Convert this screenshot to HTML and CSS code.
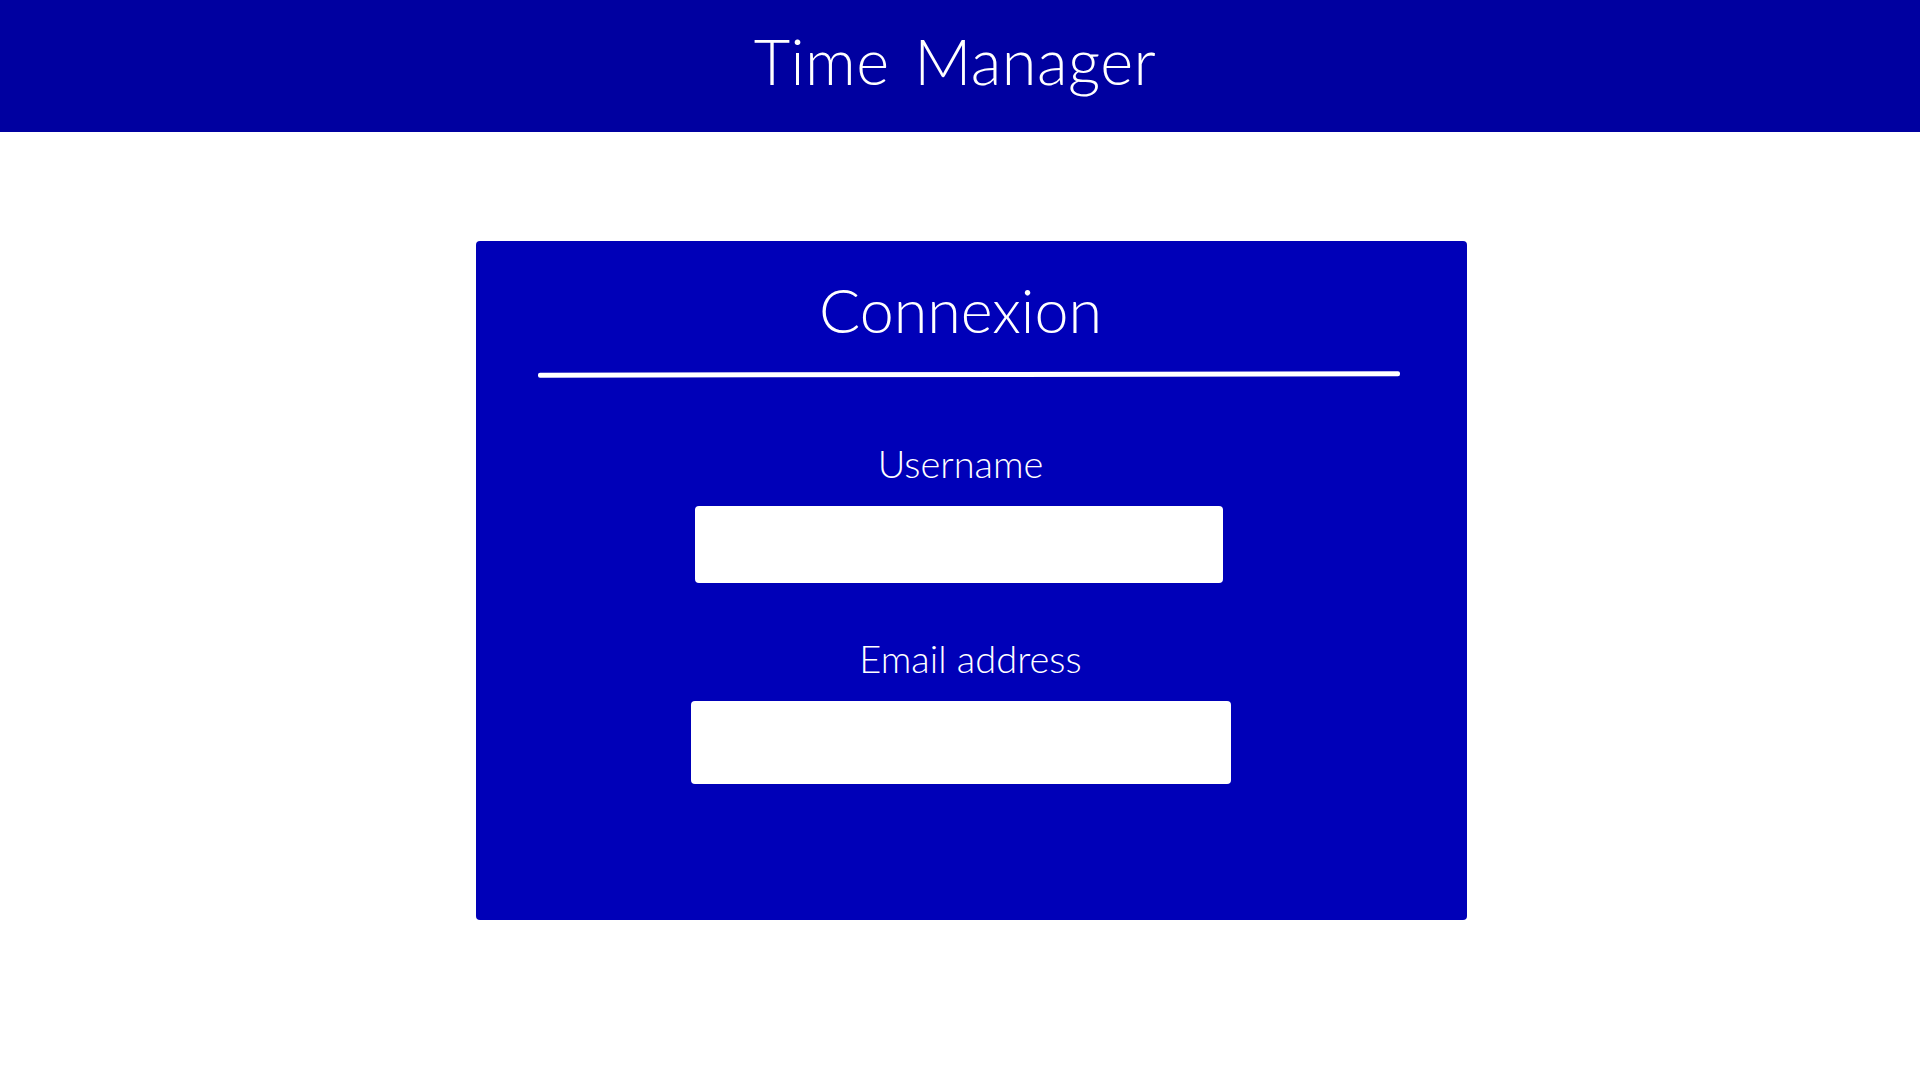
FILE: index.html
```html
<!DOCTYPE html>
<html lang="fr">
<head>
    <meta charset="UTF-8">
    <meta name="viewport" content="width=device-width, initial-scale=1.0">
    <title>Time Manager</title>
    <link rel="stylesheet" href="styles.css">
</head>
<body>
    <header class="top-bar">
        <h1 class="app-title">Time Manager</h1>
    </header>

    <main class="page">
        <form class="login-card">
            <h2 class="card-title">Connexion</h2>
            <div class="card-rule"></div>

            <div class="field">
                <label class="field-label field-user" for="username">Username</label>
                <input class="field-input input-user" type="text" id="username">
            </div>

            <div class="field">
                <label class="field-label field-mail" for="email">Email address</label>
                <input class="field-input input-mail" type="email" id="email">
            </div>
        </form>
    </main>
</body>
</html>
```

FILE: styles.css
```css
*{
    padding: 0;
    margin: 0;
    box-sizing: border-box;
}

body{
    background-color: #fff;
    font-family: Lato, "Noto Sans", sans-serif;
    font-weight: 300;
    color: #fff;
}

/* ================== header ===================== */
.top-bar{
    height: 132px;
    padding-bottom: 10px;
    background-color: #0000a0;
    text-align: center;
}

.top-bar .app-title{
    font-size: 63px;
    font-weight: 300;
    line-height: 122px;
    letter-spacing: 0.5px;
    word-spacing: 7px;
    margin-left: -10px;
}

/* ================== carte connexion ===================== */
.page{
    padding-top: 109px;
}

.login-card{
    width: 991px;
    margin-left: 476px;
    padding: 32px 22px 136px 0;
    background-color: #0000b8;
    border-radius: 4px;
    display: flex;
    flex-direction: column;
    align-items: center;
}

.login-card .card-title{
    font-size: 61px;
    font-weight: 300;
    line-height: 1.2;
}

.login-card .card-rule{
    align-self: flex-start;
    width: 862px;
    height: 5px;
    margin: 26px 0 0 62px;
    background-color: #fff;
    border-radius: 2px;
    transform: rotate(-0.1deg);
}

.field{
    display: flex;
    flex-direction: column;
    align-items: center;
}

.field-label{
    font-size: 38px;
    line-height: 1.2;
}

.field-user{
    margin-top: 64px;
}

.field-mail{
    margin-top: 53px;
    margin-left: 20px;
}

.field-input{
    margin-top: 19px;
    border: none;
    outline: none;
    background-color: #fff;
    border-radius: 4px;
}

.input-user{
    width: 528px;
    height: 77px;
    margin-left: -4px;
}

.input-mail{
    width: 540px;
    height: 83px;
    margin-top: 20px;
}
```
